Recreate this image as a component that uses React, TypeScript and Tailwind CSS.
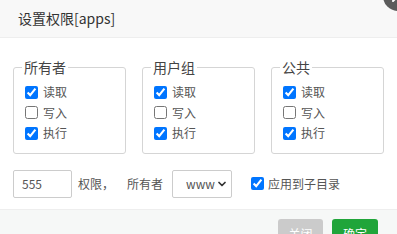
import { ChevronDown } from "lucide-react";

const font = { fontFamily: '"Noto Sans CJK SC", "Noto Sans", sans-serif' };

type Group = { name: string; read: boolean; write: boolean; exec: boolean };

const groups: Group[] = [
	{ name: "所有者", read: true, write: false, exec: true },
	{ name: "用户组", read: true, write: false, exec: true },
	{ name: "公共", read: true, write: false, exec: true },
];

function PermBox({ group }: { group: Group }) {
	const rows = [
		{ label: "读取", checked: group.read },
		{ label: "写入", checked: group.write },
		{ label: "执行", checked: group.exec },
	];
	return (
		<fieldset className="w-[113px] rounded-[3px] border border-[#d5d5d5] pl-[8px] pb-[9px]">
			<legend className="px-[2px] text-[14px] leading-[18px] text-[#444]">
				{group.name}
			</legend>
			<div className="mt-[6px] flex flex-col pl-[3px]">
				{rows.map((r) => (
					<label
						key={r.label}
						className="flex h-[20.5px] items-center gap-[5px] text-[12px] text-[#555]"
					>
						<input
							type="checkbox"
							defaultChecked={r.checked}
							className="h-[13px] w-[13px]"
						/>
						{r.label}
					</label>
				))}
			</div>
		</fieldset>
	);
}

export default function App() {
	return (
		<div
			className="relative h-[234px] w-[397px] overflow-hidden bg-white"
			style={font}
		>
			{/* Title bar */}
			<div className="flex h-[38px] items-center border-b border-[#eee] bg-[#f8f8f8] pl-[18px] text-[14px] text-[#333]">
				设置权限[apps]
			</div>

			{/* Close button, mostly outside the dialog */}
			<div className="absolute left-[383px] top-[-19px] flex h-[30px] w-[30px] items-center justify-center rounded-full bg-[#5c5c5c]">
				<svg width="14" height="14" viewBox="0 0 14 14">
					<path
						d="M2 2 L12 12 M12 2 L2 12"
						stroke="white"
						strokeWidth="2"
						strokeLinecap="round"
					/>
				</svg>
			</div>

			{/* Body */}
			<div className="px-[13px] pt-[20px] pb-[11px]">
				<div className="flex gap-[16px]">
					{groups.map((g) => (
						<PermBox key={g.name} group={g} />
					))}
				</div>

				<div className="mt-[16px] flex h-[28px] items-center text-[12px] text-[#555]">
					<input
						type="text"
						defaultValue="555"
						className="h-[28px] w-[59px] rounded-[2px] border border-[#ccc] px-[8px] text-[12px] text-[#555] outline-none"
					/>
					<span className="ml-[6px]">权限，</span>
					<span className="ml-[13px]">所有者</span>
					<div className="relative ml-[9px] h-[28px] w-[60px]">
						<select
							defaultValue="www"
							className="h-full w-full appearance-none rounded-[2px] border border-[#ccc] bg-white pl-[13px] text-[12px] text-[#555] outline-none"
						>
							<option value="www">www</option>
							<option value="root">root</option>
						</select>
						<ChevronDown
							className="pointer-events-none absolute right-[4px] top-[8px] h-[12px] w-[12px] text-[#333]"
							strokeWidth={3.5}
						/>
					</div>
					<label className="ml-[19px] flex items-center gap-[4px]">
						<input type="checkbox" defaultChecked className="h-[13px] w-[13px]" />
						应用到子目录
					</label>
				</div>
			</div>

			{/* Footer */}
			<div className="flex justify-end gap-[9px] border-t border-[#eee] bg-[#f6f8f7] pr-[19px] pt-[9px] h-[40px]">
				<button className="h-[30px] w-[45px] rounded-[3px] bg-[#cbcbcb] text-[12px] text-white">
					关闭
				</button>
				<button className="h-[30px] w-[46px] rounded-[3px] bg-[#20a53a] text-[12px] text-white">
					确定
				</button>
			</div>
		</div>
	);
}
